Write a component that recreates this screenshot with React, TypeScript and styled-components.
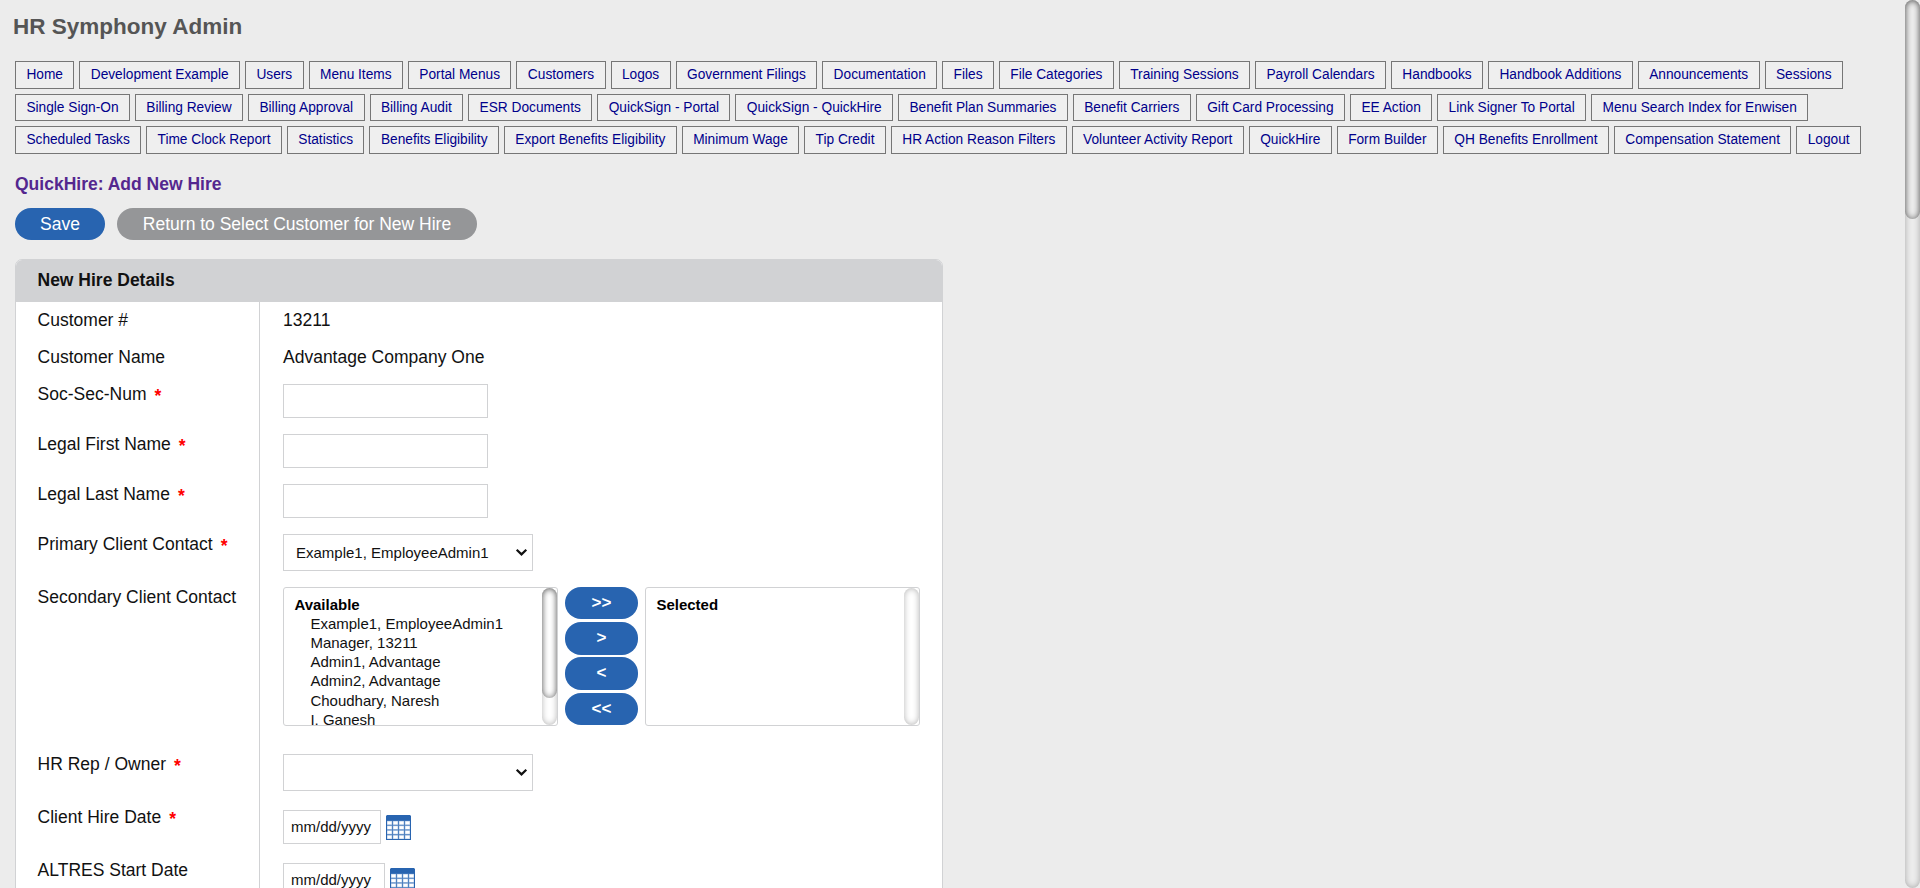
import React from "react";
import styled, { createGlobalStyle } from "styled-components";

const GlobalStyle = createGlobalStyle`
  *, *::before, *::after { box-sizing: border-box; }
  html, body { margin: 0; padding: 0; }
  body {
    background: #ececec;
    color: #111;
    font-family: "Liberation Sans", Arial, Helvetica, sans-serif;
    font-size: 17.5px;
    line-height: 21px;
    overflow: hidden;
  }
`;

const Window = styled.div`
  display: flex;
  height: 888px;
  overflow: hidden;
`;

const Page = styled.main`
  flex: 1;
  min-width: 0;
  padding: 14px 30px 0 15px;
`;

const SiteTitle = styled.h1`
  margin: 0 0 21px -2px;
  font-size: 22.5px;
  line-height: 26px;
  color: #555;
`;

const Nav = styled.nav`
  display: flex;
  flex-wrap: wrap;
  gap: 5px;
`;

const NavButton = styled.button`
  height: 27.5px;
  padding: 0.6px 10.4px 0;
  border: 1px solid #767676;
  border-radius: 0;
  background: #efefef;
  color: #00008b;
  font: 13.715px/16px "Liberation Sans", Arial, sans-serif;
  white-space: nowrap;
`;

const PageHeading = styled.h2`
  margin: 20px 0 14px;
  font-size: 17.5px;
  line-height: 20px;
  color: #54278f;
`;

const Actions = styled.div`
  display: flex;
  gap: 12px;
  margin-bottom: 19px;
`;

const Pill = styled.button<{ $tone?: "blue" | "gray"; $width: number }>`
  width: ${(p) => p.$width}px;
  height: 32px;
  padding: 0;
  border: 0;
  border-radius: 16px;
  background: ${(p) => (p.$tone === "gray" ? "#959698" : "#2864b0")};
  color: #fff;
  font: 17.5px/20px "Liberation Sans", Arial, sans-serif;
  white-space: nowrap;
`;

const MoveButton = styled(Pill)`
  height: 32.7px;
  padding-bottom: 0.4px;
  font-size: 17px;
  font-weight: bold;
`;

const Panel = styled.section`
  width: 928px;
  border: 1px solid #d1d2d4;
  border-radius: 7px 7px 0 0;
  background: #fff;
  overflow: hidden;
`;

const PanelHeader = styled.h3`
  margin: 0;
  height: 42px;
  padding: 10px 21.5px 0;
  background: #d1d2d4;
  font-size: 17.5px;
  line-height: 21px;
`;

const Row = styled.div<{ $height: number }>`
  display: flex;
  height: ${(p) => p.$height}px;
`;

const Label = styled.div`
  width: 244px;
  padding: 8px 0 0 21.6px;
  border-right: 1px solid #d1d2d4;
  white-space: nowrap;
`;

const Required = styled.span`
  margin-left: 8px;
  color: #f00;
  font-weight: bold;
  line-height: 0;
  vertical-align: -2px;
`;

const Value = styled.div<{ $offset: number }>`
  display: flex;
  align-items: flex-start;
  padding: ${(p) => p.$offset}px 0 0 23px;
`;

const TextInput = styled.input<{ $width?: number }>`
  width: ${(p) => p.$width ?? 205}px;
  height: 34px;
  padding: 0 7px;
  border: 1px solid #d1d2d4;
  background: #fff;
  color: #111;
  font: 15px "Liberation Sans", Arial, sans-serif;
  outline: none;

  &::placeholder { color: #111; opacity: 1; }
`;

const SelectBox = styled.div`
  display: flex;
  align-items: center;
  justify-content: space-between;
  width: 250px;
  height: 37px;
  padding: 0 4px 0 12px;
  border: 1px solid #d1d2d4;
  font-size: 15px;
`;

const Lists = styled.div`
  display: flex;
  gap: 7px;
`;

const ListBox = styled.div`
  display: flex;
  width: 275px;
  height: 139px;
  border: 1px solid #d1d2d4;
  border-radius: 3px;
  overflow: hidden;
`;

const Options = styled.div`
  flex: 1;
  padding: 7px 0 0 10.4px;
  font-size: 15px;
  line-height: 19.2px;
`;

const GroupName = styled.div`
  font-weight: bold;
  color: #000;
`;

const Option = styled.div`
  padding-left: 16px;
  white-space: nowrap;
`;

const Movers = styled.div`
  display: flex;
  flex-direction: column;
  gap: 2.7px;
`;

const Track = styled.div<{ $page?: boolean }>`
  flex: none;
  width: 15px;
  background: ${(p) => (p.$page ? "#ececec" : "#fff")};
  border-radius: 10px;
  box-shadow: inset 0 0 6px rgba(0, 0, 0, 0.3);
`;

const Thumb = styled.div<{ $height: number }>`
  height: ${(p) => p.$height}px;
  border-radius: 10px;
  box-shadow: inset 0 0 6px rgba(0, 0, 0, 0.5);
`;

const CalendarWrap = styled.span`
  display: flex;
  margin: 5px 0 0 5px;
`;

const navItems = [
  "Home", "Development Example", "Users", "Menu Items", "Portal Menus", "Customers", "Logos",
  "Government Filings", "Documentation", "Files", "File Categories", "Training Sessions",
  "Payroll Calendars", "Handbooks", "Handbook Additions", "Announcements", "Sessions",
  "Single Sign-On", "Billing Review", "Billing Approval", "Billing Audit", "ESR Documents",
  "QuickSign - Portal", "QuickSign - QuickHire", "Benefit Plan Summaries", "Benefit Carriers",
  "Gift Card Processing", "EE Action", "Link Signer To Portal", "Menu Search Index for Enwisen",
  "Scheduled Tasks", "Time Clock Report", "Statistics", "Benefits Eligibility",
  "Export Benefits Eligibility", "Minimum Wage", "Tip Credit", "HR Action Reason Filters",
  "Volunteer Activity Report", "QuickHire", "Form Builder", "QH Benefits Enrollment",
  "Compensation Statement", "Logout",
];

const availableContacts = [
  "Example1, EmployeeAdmin1", "Manager, 13211", "Admin1, Advantage",
  "Admin2, Advantage", "Choudhary, Naresh", "I, Ganesh",
];

const Chevron = () => (
  <svg width="13" height="9" viewBox="0 0 13 9" fill="none">
    <path d="M1.7 1.7 6.5 6.4l4.8-4.7" stroke="#111" strokeWidth="2.2" />
  </svg>
);

const CalendarIcon = () => (
  <CalendarWrap>
    <svg width="25" height="25" viewBox="0 0 25 25">
      <path d="M1 0h23l1 1v24H0V1z" fill="#2864b0" />
      <path d="M1 5.5h23V24H1z" fill="#4f81c0" />
      {[6, 10.7, 15.4, 20.2].map((y) =>
        [1, 7, 13, 19].map((x) => (
          <g key={`${x}-${y}`} fill="#fff">
            <rect x={x} y={y} width="5" height="3.8" opacity="0.6" />
            <rect x={x + 0.5} y={y + 0.5} width="4" height="2.8" />
          </g>
        ))
      )}
    </svg>
  </CalendarWrap>
);

interface FieldProps {
  label: string;
  height: number;
  offset?: number;
  required?: boolean;
  children: React.ReactNode;
}

const Field = ({ label, height, offset = 8, required, children }: FieldProps) => (
  <Row $height={height}>
    <Label>
      {label}
      {required && <Required>*</Required>}
    </Label>
    <Value $offset={offset}>{children}</Value>
  </Row>
);

export default function App() {
  return (
    <Window>
      <GlobalStyle />
      <Page>
        <SiteTitle>HR Symphony Admin</SiteTitle>
        <Nav>
          {navItems.map((item) => (
            <NavButton key={item}>{item}</NavButton>
          ))}
        </Nav>
        <PageHeading>QuickHire: Add New Hire</PageHeading>
        <Actions>
          <Pill $width={90}>Save</Pill>
          <Pill $width={360} $tone="gray">Return to Select Customer for New Hire</Pill>
        </Actions>
        <Panel>
          <PanelHeader>New Hire Details</PanelHeader>
          <Field label="Customer #" height={37}>13211</Field>
          <Field label="Customer Name" height={37}>Advantage Company One</Field>
          <Field label="Soc-Sec-Num" height={50} required><TextInput /></Field>
          <Field label="Legal First Name" height={50} required><TextInput /></Field>
          <Field label="Legal Last Name" height={50} required><TextInput /></Field>
          <Field label="Primary Client Contact" height={53} required>
            <SelectBox><span>Example1, EmployeeAdmin1</span><Chevron /></SelectBox>
          </Field>
          <Field label="Secondary Client Contact" height={167}>
            <Lists>
              <ListBox>
                <Options>
                  <GroupName>Available</GroupName>
                  {availableContacts.map((name) => <Option key={name}>{name}</Option>)}
                </Options>
                <Track><Thumb $height={110} /></Track>
              </ListBox>
              <Movers>
                {[">>", ">", "<", "<<"].map((sign) => (
                  <MoveButton key={sign} $width={73}>{sign}</MoveButton>
                ))}
              </Movers>
              <ListBox>
                <Options><GroupName>Selected</GroupName></Options>
                <Track />
              </ListBox>
            </Lists>
          </Field>
          <Field label="HR Rep / Owner" height={53} required>
            <SelectBox><span /><Chevron /></SelectBox>
          </Field>
          <Field label="Client Hire Date" height={53} offset={11} required>
            <TextInput $width={98} placeholder="mm/dd/yyyy" />
            <CalendarIcon />
          </Field>
          <Field label="ALTRES Start Date" height={53} offset={11}>
            <TextInput $width={102} placeholder="mm/dd/yyyy" />
            <CalendarIcon />
          </Field>
        </Panel>
      </Page>
      <Track $page><Thumb $height={219} /></Track>
    </Window>
  );
}
